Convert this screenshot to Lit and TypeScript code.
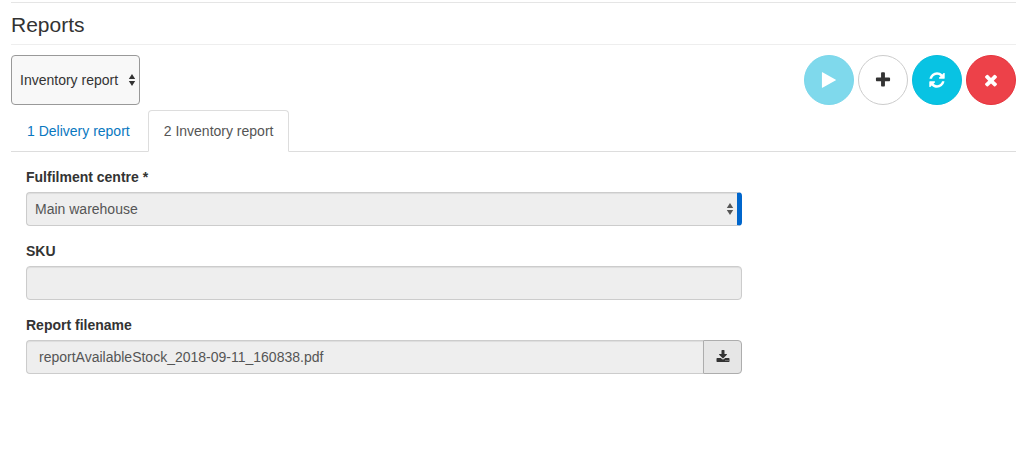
import { LitElement, html, css, svg } from "lit";
import { customElement, state } from "lit/decorators.js";
import { classMap } from "lit/directives/class-map.js";

const ICONS: Record<string, string> = {
  play: "M1576 927l-1328 738q-23 13-39.5 3t-16.5-36v-1472q0-26 16.5-36t39.5 3l1328 738q23 13 23 31t-23 31z",
  plus: "M1600 736v192q0 40-28 68t-68 28h-416v416q0 40-28 68t-68 28h-192q-40 0-68-28t-28-68v-416h-416q-40 0-68-28t-28-68v-192q0-40 28-68t68-28h416v-416q0-40 28-68t68-28h192q40 0 68 28t28 68v416h416q40 0 68 28t28 68z",
  refresh:
    "M1639 1056q0 5-1 7-64 268-268 434.5t-478 166.5q-146 0-282.5-55t-243.5-157l-129 129q-19 19-45 19t-45-19-19-45v-448q0-26 19-45t45-19h448q26 0 45 19t19 45-19 45l-137 137q71 66 161 102t187 36q134 0 250-65t186-179q11-17 53-117 8-23 30-23h192q13 0 22.5 9.5t9.5 22.5zm25-800v448q0 26-19 45t-45 19h-448q-26 0-45-19t-19-45 19-45l138-138q-148-137-349-137-134 0-250 65t-186 179q-11 17-53 117-8 23-30 23h-199q-13 0-22.5-9.5t-9.5-22.5v-7q65-268 270-434.5t480-166.5q146 0 284 55.5t245 156.5l130-129q19-19 45-19t45 19 19 45z",
  times:
    "M1490 1322q0 40-28 68l-136 136q-28 28-68 28t-68-28l-294-294-294 294q-28 28-68 28t-68-28l-136-136q-28-28-28-68t28-68l294-294-294-294q-28-28-28-68t28-68l136-136q28-28 68-28t68 28l294 294 294-294q28-28 68-28t68 28l136 136q28 28 28 68t-28 68l-294 294 294 294q28 28 28 68z",
  download:
    "M1344 1344q0-26-19-45t-45-19-45 19-19 45 19 45 45 19 45-19 19-45zm256 0q0-26-19-45t-45-19-45 19-19 45 19 45 45 19 45-19 19-45zm128-224v320q0 40-28 68t-68 28h-1472q-40 0-68-28t-28-68v-320q0-40 28-68t68-28h465l135 136q58 56 136 56t136-56l136-136h464q40 0 68 28t28 68zm-325-569q17 41-14 70l-448 448q-18 19-45 19t-45-19l-448-448q-31-29-14-70 17-39 59-39h256v-448q0-26 19-45t45-19h256q26 0 45 19t19 45v448h256q42 0 59 39z",
};

const icon = (name: string) => html`
  <svg class="icon" viewBox="0 0 1792 1792" aria-hidden="true">
    ${svg`<path d=${ICONS[name]}></path>`}
  </svg>
`;

const arrows = html`
  <svg class="arrows" viewBox="0 0 8 14" aria-hidden="true">
    <path d="M4 1L7.2 6H0.8zM4 13L0.8 8H7.2z"></path>
  </svg>
`;

const ACTIONS = [
  { icon: "play", label: "Run", kind: "run", disabled: true },
  { icon: "plus", label: "Add", kind: "add", disabled: false },
  { icon: "refresh", label: "Refresh", kind: "refresh", disabled: false },
  { icon: "times", label: "Close", kind: "close", disabled: false },
];

const TABS = ["1 Delivery report", "2 Inventory report"];

@customElement("app-root")
export class AppRoot extends LitElement {
  @state() private activeTab = 1;

  static styles = css`
    :host {
      display: block;
      padding: 2px 5px 24px 11px;
      background: #fff;
      color: #333;
      font: 14px/20px "Liberation Sans", Arial, sans-serif;
    }
    *,
    *::before,
    *::after {
      box-sizing: border-box;
    }
    button,
    input,
    select {
      margin: 0;
      font: inherit;
      color: inherit;
    }
    .header {
      border-top: 1px solid #e5e5e5;
      border-bottom: 1px solid #eee;
      padding: 10px 0 7px;
    }
    .title {
      margin: 0;
      font-size: 21px;
      line-height: 24px;
      font-weight: 500;
    }
    .toolbar {
      display: flex;
      justify-content: space-between;
      padding: 10px 0 5px;
    }
    .actions {
      display: flex;
      gap: 4px;
    }
    .icon {
      display: block;
      width: 18px;
      height: 18px;
      fill: currentColor;
    }
    .action {
      display: grid;
      place-items: center;
      width: 50px;
      height: 50px;
      padding: 0;
      border: 1px solid;
      border-radius: 50%;
    }
    .run {
      background: #7fd9ec;
      border-color: #7bd7eb;
      color: #fff;
    }
    .add {
      background: #fff;
      border-color: #ccc;
      color: #333;
    }
    .refresh {
      background: #08c3e3;
      border-color: #07bcdc;
      color: #fff;
    }
    .close {
      background: #ed4149;
      border-color: #e6343d;
      color: #fff;
    }
    .picker {
      display: grid;
      align-items: center;
    }
    .picker > * {
      grid-area: 1 / 1;
    }
    .select {
      appearance: none;
      border-radius: 4px;
      opacity: 1;
    }
    .arrows {
      justify-self: end;
      width: 8px;
      height: 14px;
      margin-right: 4px;
      fill: currentColor;
      pointer-events: none;
    }
    .report-select {
      height: 50px;
      padding: 0 20px 0 8px;
      border: 1px solid #999;
      background: #f8f8f8;
    }
    .tabs {
      display: flex;
      gap: 2px;
      border-bottom: 1px solid #ddd;
    }
    .tab {
      margin-bottom: -1px;
      padding: 10px 15px;
      border: 1px solid transparent;
      border-radius: 4px 4px 0 0;
      color: #0a78bf;
      text-decoration: none;
    }
    .tab.active {
      border-color: #ddd #ddd #fff;
      background: #fff;
      color: #555;
    }
    .form {
      display: grid;
      gap: 15px;
      max-width: 746px;
      padding: 15px 15px 0;
    }
    .label {
      display: block;
      margin-bottom: 5px;
      font-weight: 700;
    }
    .control {
      width: 100%;
      height: 34px;
      border: 1px solid #ccc;
      border-radius: 4px;
      background: #eee;
      color: #555;
      box-shadow: inset 0 1px 1px rgba(0, 0, 0, 0.075);
    }
    .text {
      padding: 0 12px;
    }
    .centre {
      padding: 0 24px 0 8px;
      border-right: 5px solid #06c;
    }
    .form .arrows {
      margin-right: 8px;
      color: #555;
    }
    .group {
      display: flex;
    }
    .group .text {
      flex: 1;
      min-width: 0;
      border-right: 0;
      border-radius: 4px 0 0 4px;
    }
    .download {
      display: grid;
      place-items: center;
      width: 39px;
      height: 34px;
      padding: 0;
      border: 1px solid #adadad;
      border-radius: 0 4px 4px 0;
      background: #e6e6e6;
    }
    .download .icon {
      width: 14px;
      height: 14px;
    }
  `;

  private selectTab(event: Event, index: number) {
    event.preventDefault();
    this.activeTab = index;
  }

  render() {
    return html`
      <header class="header"><h1 class="title">Reports</h1></header>

      <div class="toolbar">
        <div class="picker">
          <select class="select report-select" aria-label="Report type">
            <option>Inventory report</option>
          </select>
          ${arrows}
        </div>
        <div class="actions">
          ${ACTIONS.map(
            (a) => html`<button
              class="action ${a.kind}"
              type="button"
              aria-label=${a.label}
              ?disabled=${a.disabled}
            >
              ${icon(a.icon)}
            </button>`
          )}
        </div>
      </div>

      <nav class="tabs">
        ${TABS.map(
          (name, i) => html`<a
            href="#"
            class=${classMap({ tab: true, active: i === this.activeTab })}
            @click=${(e: Event) => this.selectTab(e, i)}
            >${name}</a
          >`
        )}
      </nav>

      <form class="form">
        <div>
          <label class="label" for="centre">Fulfilment centre *</label>
          <div class="picker">
            <select id="centre" class="select control centre" disabled>
              <option>Main warehouse</option>
            </select>
            ${arrows}
          </div>
        </div>
        <div>
          <label class="label" for="sku">SKU</label>
          <input id="sku" class="control text" type="text" readonly />
        </div>
        <div>
          <label class="label" for="filename">Report filename</label>
          <div class="group">
            <input
              id="filename"
              class="control text"
              type="text"
              readonly
              .value=${"reportAvailableStock_2018-09-11_160838.pdf"}
            />
            <button class="download" type="button" aria-label="Download">
              ${icon("download")}
            </button>
          </div>
        </div>
      </form>
    `;
  }
}
